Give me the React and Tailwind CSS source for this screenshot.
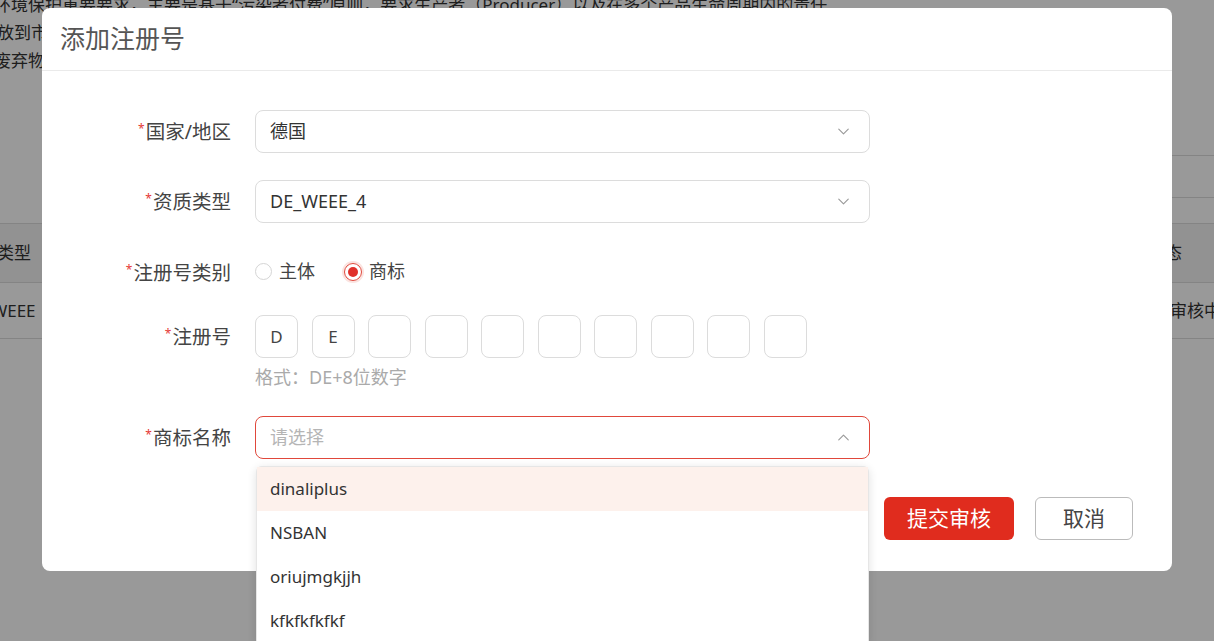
import { ChevronDown, ChevronUp } from "lucide-react"

const labelCls =
  "w-[189px] shrink-0 h-[43px] flex items-center justify-end text-[19.5px] text-[#444]"

function Label({ text }) {
  return (
    <div className={labelCls}>
      <span className="text-[#e53935] text-[12px] leading-none self-start mt-[13px] mr-[1px]">*</span>
      {text}
    </div>
  )
}

function Select({ value, placeholder, open }) {
  return (
    <div
      className={
        "relative w-[615px] h-[43px] rounded-lg bg-white flex items-center justify-between pl-[14px] pr-[16px] border " +
        (open ? "border-[#e0483b]" : "border-[#dcdcdc]")
      }
    >
      {value ? (
        <span className="text-[18px] text-[#333]">{value}</span>
      ) : (
        <span className="text-[18px] text-[#b5b5b5]">{placeholder}</span>
      )}
      {open ? (
        <ChevronUp size={19} strokeWidth={1.4} className="text-[#999]" />
      ) : (
        <ChevronDown size={19} strokeWidth={1.4} className="text-[#999]" />
      )}
    </div>
  )
}

const brands = ["dinaliplus", "NSBAN", "oriujmgkjjh", "kfkfkfkfkf"]
const codes = ["D", "E", "", "", "", "", "", "", "", ""]

export default function App() {
  return (
    <div className="relative w-[1214px] h-[641px] overflow-hidden bg-white font-['Noto_Sans','Noto_Sans_CJK_SC',sans-serif]">
      {/* page behind the dialog */}
      <div className="text-[17px] text-[#333] leading-[28px] mt-[-9px] whitespace-nowrap">
        <div className="-ml-[6px]">
          环境保护重要要求，主要是基于“污染者付费”原则，要求生产者（Producer）以及在多个产品生命周期内的责任
        </div>
        <div className="-ml-[20px]">投放到市</div>
        <div className="-ml-[6px]">废弃物</div>
      </div>
      <div className="mt-[80px] ml-auto w-[240px]">
        <div className="h-[42px] border-t border-[#ddd]" />
        <div className="h-[26px] border-t border-[#ddd]" />
      </div>
      <div className="h-[59px] border-t border-[#ddd] bg-[#f4f4f4] flex items-center text-[17px] text-[#333] whitespace-nowrap">
        <span className="-ml-[37px]">资质类型</span>
        <span className="ml-auto w-[66px]">状态</span>
      </div>
      <div className="h-[57px] border-t border-b border-[#ddd] flex items-center text-[17px] text-[#333] whitespace-nowrap">
        <span className="-ml-[38px]">DE_WEEE</span>
        <span className="ml-auto w-[44px]">审核中</span>
      </div>

      {/* overlay */}
      <div className="absolute inset-0 bg-black/40" />

      {/* dialog */}
      <div className="absolute left-[42px] top-[8px] w-[1130px] h-[563px] bg-white rounded-lg">
        <div className="h-[63px] flex items-center pl-[18px] border-b border-[#eaeaea]">
          <span className="text-[25px] text-[#555]">添加注册号</span>
        </div>

        <div className="pt-[39px]">
          <div className="flex gap-[24px]">
            <Label text="国家/地区" />
            <Select value="德国" />
          </div>

          <div className="flex gap-[24px] mt-[27px]">
            <Label text="资质类型" />
            <Select value="DE_WEEE_4" />
          </div>

          <div className="flex gap-[24px] mt-[28px]">
            <Label text="注册号类别" />
            <div className="flex items-center h-[43px] text-[18px] text-[#444] -mt-[1px]">
              <span className="w-[17px] h-[17px] rounded-full border border-[#d5d5d5]" />
              <span className="ml-[7px]">主体</span>
              <span className="ml-[29px] w-[18px] h-[18px] rounded-full border border-[#e0483b] ring-2 ring-[#fbe3e0] flex items-center justify-center">
                <span className="w-[10px] h-[10px] rounded-full bg-[#e0302a]" />
              </span>
              <span className="ml-[7px]">商标</span>
            </div>
          </div>

          <div className="flex gap-[24px] mt-[21px]">
            <Label text="注册号" />
            <div>
              <div className="flex gap-[13.5px]">
                {codes.map((c, i) => (
                  <div
                    key={i}
                    className="w-[43px] h-[43px] rounded-lg border border-[#dcdcdc] flex items-center justify-center text-[17px] text-[#444]"
                  >
                    {c}
                  </div>
                ))}
              </div>
              <div className="mt-[8px] text-[18px] leading-[22px] text-[#aaa]">格式：DE+8位数字</div>
            </div>
          </div>

          <div className="flex gap-[24px] mt-[28px]">
            <Label text="商标名称" />
            <div className="relative">
              <Select placeholder="请选择" open />
              <div className="absolute z-10 left-[1px] top-[50px] w-[613px] bg-white border border-[#e6e6e6] rounded-t-md shadow-[0_2px_10px_rgba(0,0,0,0.12)]">
                {brands.map((b, i) => (
                  <div
                    key={b}
                    className={
                      "h-[44px] flex items-center pl-[13px] text-[17px] text-[#333] " +
                      (i === 0 ? "bg-[#fdf1ec]" : "")
                    }
                  >
                    {b}
                  </div>
                ))}
              </div>
            </div>
          </div>

          <div className="flex justify-end gap-[21px] pr-[39px] mt-[38px]">
            <button className="w-[130px] h-[43px] rounded-md bg-[#e02c1e] text-white text-[21px]">
              提交审核
            </button>
            <button className="w-[98px] h-[43px] rounded-md border border-[#bbb] bg-white text-[#444] text-[21px]">
              取消
            </button>
          </div>
        </div>
      </div>
    </div>
  )
}
